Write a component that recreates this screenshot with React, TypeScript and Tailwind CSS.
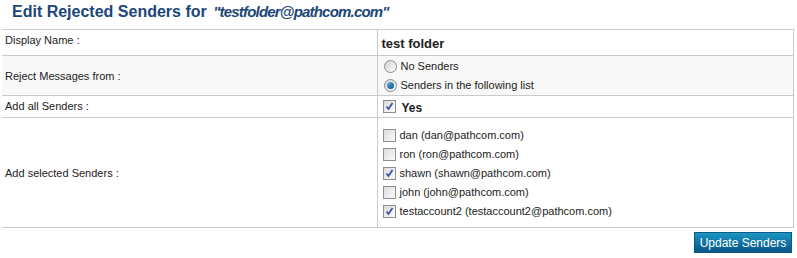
import React from 'react';

const senders = [
  { name: 'dan', email: 'dan@pathcom.com', checked: false },
  { name: 'ron', email: 'ron@pathcom.com', checked: false },
  { name: 'shawn', email: 'shawn@pathcom.com', checked: true },
  { name: 'john', email: 'john@pathcom.com', checked: false },
  { name: 'testaccount2', email: 'testaccount2@pathcom.com', checked: true },
];

function Check({ checked }: { checked: boolean }) {
  return (
    <span className="inline-block w-[13px] h-[13px] border border-[#8f8f8f] bg-gradient-to-br from-[#dcdcdc] to-[#fbfbfb] relative shrink-0">
      {checked && (
        <svg viewBox="0 0 11 11" className="absolute left-0 top-0 w-[11px] h-[11px]">
          <path d="M2.5 5.5 L4.5 8 L8.5 2" fill="none" stroke="#3a57a8" strokeWidth="1.8" />
        </svg>
      )}
    </span>
  );
}

function Radio({ checked }: { checked: boolean }) {
  return (
    <span className="inline-flex items-center justify-center w-[13px] h-[13px] rounded-full border border-[#8c8c8c] bg-gradient-to-br from-[#d6d6d6] to-[#fafafa] shrink-0">
      {checked && <span className="w-[7px] h-[7px] rounded-full bg-gradient-to-br from-[#5fb4e6] to-[#0b4f8a]" />}
    </span>
  );
}

export default function App() {
  return (
    <div className="w-[797px] h-[258px] bg-white font-['Liberation_Sans',Arial,sans-serif] text-[#222]">
      <h1 className="pl-[12px] pt-[1px] h-[29px] text-[16px] font-bold text-[#1b4677] leading-[22px]">
        Edit Rejected Senders for{' '}
        <i className="ml-[2px] text-[15px] tracking-[-0.8px]">"testfolder@pathcom.com"</i>
      </h1>
      <table className="ml-[2px] w-[792px] border-collapse text-[11px]">
        <tbody>
          <tr className="h-[26px] border-y border-[#cbcbcb]">
            <td className="w-[375px] pl-[3px] align-top pt-[2px]">Display Name :</td>
            <td className="border-x border-[#cbcbcb] pl-[4px] text-[13px] font-bold pt-[2px]">test folder</td>
          </tr>
          <tr className="h-[40px] border-b border-[#cbcbcb] bg-[#f8f8f8]">
            <td className="pl-[3px] pt-[1px]">Reject Messages from :</td>
            <td className="border-x border-[#cbcbcb] pl-[6px]">
              <div className="flex items-center gap-[4px] h-[18px] mt-[1px]">
                <Radio checked={false} />
                <span>No Senders</span>
              </div>
              <div className="flex items-center gap-[4px] h-[18px] mt-[1px]">
                <Radio checked />
                <span>Senders in the following list</span>
              </div>
            </td>
          </tr>
          <tr className="h-[22px] border-b border-[#cbcbcb]">
            <td className="pl-[3px]">Add all Senders :</td>
            <td className="border-x border-[#cbcbcb] pl-[5px]">
              <div className="flex items-center gap-[6px]">
                <Check checked />
                <span className="text-[12px] font-bold mt-[3px]">Yes</span>
              </div>
            </td>
          </tr>
          <tr className="h-[110px] border-b border-[#cbcbcb]">
            <td className="pl-[3px] pt-[2px]">Add selected Senders :</td>
            <td className="border-x border-[#cbcbcb] pl-[5px] pt-[2px]">
              {senders.map((s) => (
                <div key={s.name} className="flex items-center gap-[4px] h-[19px]">
                  <Check checked={s.checked} />
                  <span>
                    {s.name} ({s.email})
                  </span>
                </div>
              ))}
            </td>
          </tr>
        </tbody>
      </table>
      <div className="flex justify-end pr-[5px] pt-[4px]">
        <button className="h-[21px] w-[98px] text-[12px] text-white bg-gradient-to-b from-[#1b95c2] to-[#0a5688] border border-[#0b5a86]">
          Update Senders
        </button>
      </div>
    </div>
  );
}
